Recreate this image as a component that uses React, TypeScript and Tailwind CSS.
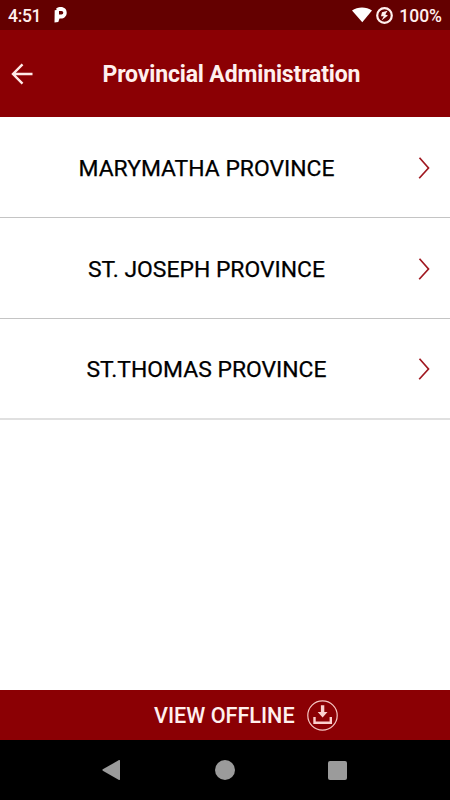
import React from "react";

const provinces = ["MARYMATHA PROVINCE", "ST. JOSEPH PROVINCE", "ST.THOMAS PROVINCE"];

function StatusBar() {
  return (
    <div className="flex h-[30px] items-center bg-[#640000] pl-2 pr-[8px] text-[17.5px] font-medium text-[#fff0ee]">
      <span className="w-[46px] pt-[2px] tracking-[-0.3px]">4:51</span>
      <svg className="h-[16px] w-[13px]" viewBox="0 0 13 16">
        <path
          fill="#fff"
          fillRule="evenodd"
          d="M.7 3.200 2.500 3 2.300 1.200C3.700.3 5.200 0 6.800 0 10.300 0 12.700 2.200 12.700 5.700S10 11.500 7 11.500H5.500L4.300 15 .5 15.400ZM5 4V7.600H7.500A1.800 1.800 0 0 0 7.500 4Z"
        />
      </svg>
      <div className="ml-auto flex items-center">
        <svg className="mr-[4px] h-4 w-5" viewBox="0 0 20 16">
          <path fill="#fff" d="M0 3.500C5.500-.6 14.500-.6 20 3.500L10.300 15.300Z" />
        </svg>
        <svg className="mr-[6px] h-[17px] w-[17px]" viewBox="0 0 17 17">
          <circle cx="8.500" cy="8.500" r="7.300" fill="none" stroke="#fff0ee" strokeWidth="2.200" />
          <path fill="#fff0ee" d="M11.500 3.700 6 5.200 5 9.200 7.800 9.200 5.500 13.500 12 8.400 9.300 7.500Z" />
        </svg>
        <span className="pt-[2px]">100%</span>
      </div>
    </div>
  );
}

function Header() {
  return (
    <header className="flex h-[87px] items-center bg-[#8b0004] pl-[11px]">
      <svg className="h-[22px] w-[22px]" viewBox="0 0 22 22" fill="none" stroke="#ffe9e7" strokeWidth="2.400">
        <path d="M21.500 11H2M11.500 1.300 2 11 11.500 20.700" />
      </svg>
      <h1 className="ml-[69.5px] whitespace-nowrap pt-[4px] text-[23px] font-bold tracking-[-0.15px] text-[#fff0ee]">
        Provincial Administration
      </h1>
    </header>
  );
}

function ProvinceRow({ name }: { name: string }) {
  return (
    <li className="flex h-[101px] items-center border-b border-[#c4c4c4] pr-5 last:border-b-2 last:border-[#e0e0e0]">
      <span className="flex-1 pr-[5px] pt-[4px] text-center text-[22.9px] text-black [-webkit-text-stroke:0.25px_black]">
        {name}
      </span>
      <svg className="mt-[1px] h-[22px] w-3" viewBox="0 0 12 22" fill="none" stroke="#a01820" strokeWidth="1.700">
        <path d="M1.500 .8 10.500 11 1.200 21.200" />
      </svg>
    </li>
  );
}

function OfflineBar() {
  return (
    <div className="flex h-[50px] items-center bg-[#8b0004] pl-[154px] text-[#fff0ee]">
      <span className="whitespace-nowrap pt-[3px] text-[21.6px] font-medium">VIEW OFFLINE</span>
      <svg className="ml-[12px] h-[31px] w-[31px]" viewBox="0 0 31 31">
        <circle cx="15.500" cy="15.500" r="14.700" fill="none" stroke="#f6c6c4" strokeWidth="1.200" />
        <path fill="#fbd0ce" d="M13.900 5.300H17.300V12H20.500L15.600 17.400 10.700 12H13.900Z" />
        <path fill="none" stroke="#fbd0ce" strokeWidth="2.400" d="M7.500 17V22.800H23.800V17" />
      </svg>
    </div>
  );
}

function NavBar() {
  return (
    <nav className="flex h-[60px] items-center bg-black text-[#9b9b9b]">
      <svg className="ml-[102px] h-5 w-[18px]" viewBox="0 0 18 20">
        <path fill="currentColor" d="M17 .1Q18-.3 18 .8V19.200Q18 20.300 17 19.900L.8 10.700Q0 10 .8 9.300Z" />
      </svg>
      <div className="ml-[95px] h-5 w-5 rounded-full bg-[#9b9b9b]" />
      <div className="ml-[93px] h-[19px] w-[19px] rounded-[2px] bg-[#9b9b9b]" />
    </nav>
  );
}

function App() {
  return (
    <div className="flex h-[800px] w-[450px] flex-col overflow-hidden bg-white font-[Roboto,sans-serif]">
      <StatusBar />
      <Header />
      <ul className="flex-1">
        {provinces.map((name) => (
          <ProvinceRow key={name} name={name} />
        ))}
      </ul>
      <OfflineBar />
      <NavBar />
    </div>
  );
}

export default App;
